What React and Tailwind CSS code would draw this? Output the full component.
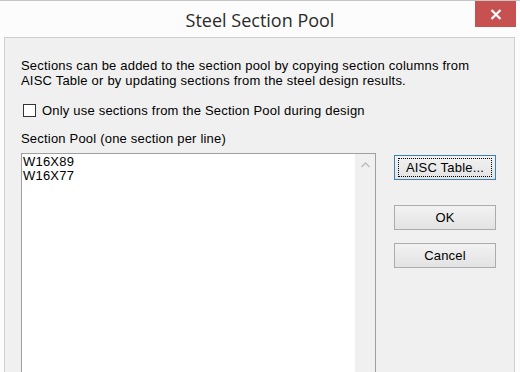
import React from "react";

function Btn({ children, focused }) {
  return (
    <div
      className={
        "w-[102px] h-[25px] flex items-center justify-center text-[13px] text-black bg-gradient-to-b from-[#f2f2f2] to-[#e3e3e3] border " +
        (focused ? "border-[#3c7fb1]" : "border-[#acacac]")
      }
    >
      {focused ? (
        <div className="w-[94px] h-[19px] border border-dotted border-black flex items-center justify-center">
          {children}
        </div>
      ) : (
        children
      )}
    </div>
  );
}

export default function App() {
  return (
    <div
      className="w-[520px] h-[372px] bg-[#fcfcfc] border-t border-[#c6c6c6] flex flex-col overflow-hidden"
      style={{ fontFamily: '"Liberation Sans", Arial, sans-serif' }}
    >
      <div className="relative h-[36px] shrink-0 flex items-center justify-center">
        <span
          className="text-[18px] text-[#2b2b2b] mt-[2px]"
          style={{ fontFamily: '"Open Sans", "Noto Sans", sans-serif' }}
        >
          Steel Section Pool
        </span>
        <div className="absolute right-[4px] top-0 w-[41px] h-[26px] bg-[#c75050] flex items-center justify-center">
          <svg width="12" height="11" viewBox="0 0 12 11">
            <path d="M1.5 1 L10.5 10 M10.5 1 L1.5 10" stroke="white" strokeWidth="2.2" />
          </svg>
        </div>
      </div>
      <div className="ml-[4px] mr-[5px] flex-1 bg-[#f0f0f0] border border-b-0 border-[#cfcfcf] pl-[16px] pt-[20px] flex flex-col text-[13px] tracking-[0.2px] text-black">
        <div className="leading-[15px]">
          <div>Sections can be added to the section pool by copying section columns from</div>
          <div>AISC Table or by updating sections from the steel design results.</div>
        </div>
        <div className="flex items-center mt-[15px] h-[15px]">
          <div className="w-[13px] h-[13px] bg-white border border-[#333] ml-[2px]" />
          <span className="ml-[6px]">Only use sections from the Section Pool during design</span>
        </div>
        <div className="mt-[13px] leading-[15px]">Section Pool (one section per line)</div>
        <div className="flex mt-[7px] flex-1">
          <div className="w-[355px] border border-b-0 border-[#a0a0a0] bg-white flex">
            <div className="flex-1 pl-[1px] pt-[1px] leading-[14px]">
              <div>W16X89</div>
              <div>W16X77</div>
            </div>
            <div className="w-[20px] bg-[#f0f0f0] flex justify-center pt-[8px]">
              <svg width="9" height="6" viewBox="0 0 9 6">
                <path d="M0.5 5 L4.5 1 L8.5 5" fill="none" stroke="#bcbcbc" strokeWidth="1.4" />
              </svg>
            </div>
          </div>
          <div className="ml-[18px] mt-[2px] flex flex-col">
            <Btn focused>AISC Table...</Btn>
            <div className="mt-[25px]">
              <Btn>OK</Btn>
            </div>
            <div className="mt-[13px]">
              <Btn>Cancel</Btn>
            </div>
          </div>
        </div>
      </div>
    </div>
  );
}
